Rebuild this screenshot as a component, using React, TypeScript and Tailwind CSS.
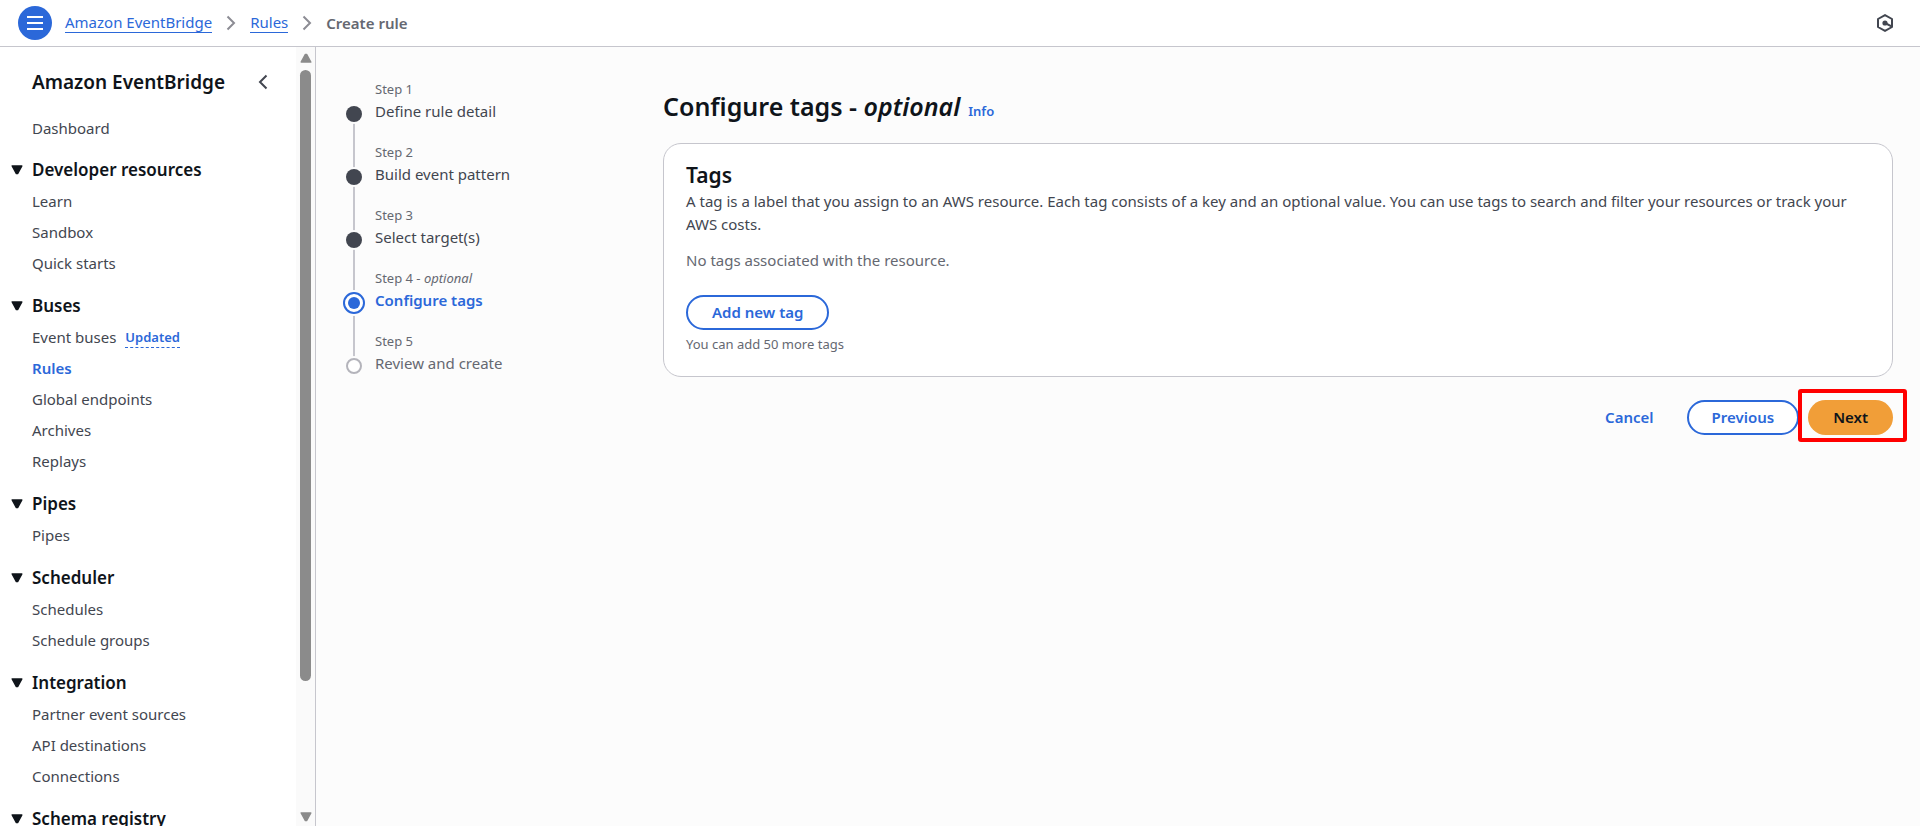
type NavLink = { label: string; badge?: string; active?: boolean };
type NavSection = { title: string; links: NavLink[] };
type StepState = 'done' | 'current' | 'upcoming';
type Step = { name: string; state: StepState; optional?: boolean };

const sections: NavSection[] = [
  { title: 'Developer resources', links: [{ label: 'Learn' }, { label: 'Sandbox' }, { label: 'Quick starts' }] },
  {
    title: 'Buses',
    links: [
      { label: 'Event buses', badge: 'Updated' },
      { label: 'Rules', active: true },
      { label: 'Global endpoints' },
      { label: 'Archives' },
      { label: 'Replays' },
    ],
  },
  { title: 'Pipes', links: [{ label: 'Pipes' }] },
  { title: 'Scheduler', links: [{ label: 'Schedules' }, { label: 'Schedule groups' }] },
  {
    title: 'Integration',
    links: [{ label: 'Partner event sources' }, { label: 'API destinations' }, { label: 'Connections' }],
  },
  { title: 'Schema registry', links: [] },
];

const steps: Step[] = [
  { name: 'Define rule detail', state: 'done' },
  { name: 'Build event pattern', state: 'done' },
  { name: 'Select target(s)', state: 'done' },
  { name: 'Configure tags', state: 'current', optional: true },
  { name: 'Review and create', state: 'upcoming' },
];

const stepText: Record<StepState, string> = {
  done: 'text-[#424650]',
  current: 'font-semibold text-[#2b68d9]',
  upcoming: 'text-[#656871]',
};

function Chevron({ className }: { className: string }) {
  return (
    <svg viewBox="0 0 10 16" fill="none" stroke="currentColor" strokeWidth="2" className={className} aria-hidden="true">
      <path d="M1.5 1.5 8 8l-6.5 6.5" />
    </svg>
  );
}

function Triangle({ className }: { className: string }) {
  return (
    <svg viewBox="0 0 12 10" fill="currentColor" stroke="currentColor" strokeWidth="1.5" strokeLinejoin="round" className={className} aria-hidden="true">
      <path d="M1.2 1h9.6L6.6 8.6H5.4Z" />
    </svg>
  );
}

function TopBar() {
  return (
    <header className="flex h-[47px] shrink-0 items-center border-b border-[#c6c6cd] bg-white pl-[18px] pr-[27px]">
      <button type="button" aria-label="Open navigation" className="flex size-[34px] items-center justify-center rounded-full bg-[#2b68d9]">
        <svg viewBox="0 0 16 14" stroke="#fff" strokeWidth="2" className="h-[14px] w-4" aria-hidden="true">
          <path d="M0 1h16M0 7h16M0 13h16" />
        </svg>
      </button>
      <nav aria-label="Breadcrumbs" className="ml-[13px]">
        <ol className="flex items-center gap-[14px]">
          <li className="flex items-center gap-[14px] text-[#2b68d9]">
            <a href="#eventbridge" className="border-b border-[#2b68d9] leading-[19px]">Amazon EventBridge</a>
            <Chevron className="h-4 w-[10px] text-[#8c8c94]" />
          </li>
          <li className="flex items-center gap-[14px] text-[#2b68d9]">
            <a href="#rules" className="border-b border-[#2b68d9] leading-[19px]">Rules</a>
            <Chevron className="h-4 w-[10px] text-[#8c8c94]" />
          </li>
          <li className="font-semibold text-[#656871]" aria-current="page">Create rule</li>
        </ol>
      </nav>
      <button type="button" aria-label="Assistant" className="ml-auto text-[#424650]">
        <svg viewBox="0 0 16 18" fill="none" stroke="currentColor" strokeWidth="2" strokeLinejoin="round" className="h-[18px] w-4" aria-hidden="true">
          <path d="M8 1.1 15 5v8l-7 3.9L1 13V5Z" />
          <path d="m8 9 6.5 3.4" />
          <circle cx="8" cy="9" r="1.6" fill="currentColor" />
        </svg>
      </button>
    </header>
  );
}

function Sidebar() {
  return (
    <aside className="flex w-[316px] shrink-0 border-r border-[#c6c6cd] bg-white">
      <div className="min-w-0 flex-1 overflow-hidden">
        <div className="flex items-center justify-between pb-[21px] pl-8 pr-[28px] pt-[21px]">
          <h2 className="text-[19px] font-semibold leading-7 text-[#0f141a]">Amazon EventBridge</h2>
          <button type="button" aria-label="Close navigation" className="text-[#424650]">
            <Chevron className="h-4 w-[10px] rotate-180" />
          </button>
        </div>
        <nav aria-label="Amazon EventBridge">
          <a href="#dashboard" className="mb-[13px] block pl-8 leading-[23px] text-[#424650]">Dashboard</a>
          {sections.map((section) => (
            <section key={section.title} className="mb-[10px]">
              <h3 className="text-[17px] font-semibold text-[#0f141a]">
                <button type="button" aria-expanded="true" className="flex h-[33px] items-center gap-[9px] pl-[11px]">
                  <Triangle className="h-[10px] w-3" />
                  {section.title}
                </button>
              </h3>
              <ul className="pl-8">
                {section.links.map((link) => (
                  <li key={link.label} className="flex h-[31px] items-center gap-[9px]">
                    <a href="#nav" className={link.active ? 'font-semibold text-[#2b68d9]' : 'text-[#424650]'}>
                      {link.label}
                    </a>
                    {link.badge && (
                      <button type="button" className="border-b border-dashed border-[#2b68d9] text-[13px] font-semibold leading-5 text-[#2b68d9]">
                        {link.badge}
                      </button>
                    )}
                  </li>
                ))}
              </ul>
            </section>
          ))}
        </nav>
      </div>
      <div className="flex w-[19px] shrink-0 flex-col items-center bg-[#fafafa] pb-1 pt-[6px] text-[#8b8b8b]" aria-hidden="true">
        <Triangle className="mb-[7px] h-[10px] w-3 shrink-0 rotate-180" />
        <div className="h-[79.5%] w-[11px] rounded-full bg-[#8b8b8b]" />
        <Triangle className="mt-auto h-[10px] w-3 shrink-0" />
      </div>
    </aside>
  );
}

function StepMarker({ state }: { state: StepState }) {
  if (state === 'current') {
    return (
      <span className="relative z-10 flex size-[22px] items-center justify-center rounded-full border-2 border-[#2b68d9] bg-white ring-2 ring-[#fcfcfc]">
        <span className="size-3 rounded-full bg-[#2b68d9]" />
      </span>
    );
  }
  if (state === 'upcoming') {
    return <span className="relative z-10 size-4 rounded-full border-2 border-[#b4b4bb] bg-white ring-2 ring-[#fcfcfc]" />;
  }
  return <span className="relative z-10 size-4 rounded-full bg-[#424650] ring-2 ring-[#fcfcfc]" />;
}

function Steps() {
  return (
    <nav aria-label="Steps" className="w-[321px] shrink-0">
      <ol>
        {steps.map((step, i) => (
          <li key={step.name} className="flex h-[63px] items-end gap-[9px]">
            <span className="flex h-full w-6 flex-col items-center" aria-hidden="true">
              <span className={i === 0 ? '-my-1 w-[2px] flex-1' : '-my-1 w-[2px] flex-1 bg-[#c6c6cd]'} />
              <span className="flex size-6 shrink-0 items-center justify-center">
                <StepMarker state={step.state} />
              </span>
            </span>
            <span className="pb-[3px]">
              <span className="block text-[13px] leading-[22px] text-[#656871]">
                Step {i + 1}
                {step.optional && <> - <i>optional</i></>}
              </span>
              <a href="#step" className={`block leading-[23px] ${stepText[step.state]}`}>{step.name}</a>
            </span>
          </li>
        ))}
      </ol>
    </nav>
  );
}

export default function App() {
  return (
    <div className="flex h-screen flex-col overflow-hidden bg-[#fcfcfc] font-['Noto_Sans',sans-serif] text-[15px] leading-[23px]">
      <TopBar />
      <div className="flex min-h-0 flex-1">
        <Sidebar />
        <main className="flex min-w-0 flex-1 items-start pl-[26px] pr-[27px] pt-4">
          <Steps />
          <div className="min-w-0 flex-1 pt-[26px]">
            <div className="flex items-baseline gap-2">
              <h1 className="text-[25px] font-semibold leading-[34px] text-[#0f141a]">
                Configure tags - <i>optional</i>
              </h1>
              <a href="#info" className="text-[13px] font-semibold text-[#2b68d9]">Info</a>
            </div>
            <section className="mt-5 rounded-[18px] border border-[#c6c6cd] bg-white px-[22px] pb-[22px] pt-[17px]">
              <h2 className="text-[21px] font-semibold leading-[29px] text-[#0f141a]">Tags</h2>
              <p className="text-[#424650]">
                A tag is a label that you assign to an AWS resource. Each tag consists of a key and an optional value. You
                can use tags to search and filter your resources or track your AWS costs.
              </p>
              <p className="mt-[13px] text-[#656871]">No tags associated with the resource.</p>
              <button type="button" className="mt-[23px] block h-[35px] rounded-full border-2 border-[#2b68d9] bg-white px-6 font-semibold text-[#2b68d9]">
                Add new tag
              </button>
              <p className="mt-1 text-[13px] leading-5 text-[#656871]">You can add 50 more tags</p>
            </section>
            <div className="mt-[23px] flex items-center justify-end font-semibold">
              <button type="button" className="mr-[33px] text-[#2b68d9]">Cancel</button>
              <button type="button" className="mr-[9px] h-[35px] rounded-full border-2 border-[#2b68d9] bg-white px-[23px] text-[#2b68d9]">
                Previous
              </button>
              <div className="relative">
                <button type="button" className="h-[35px] rounded-full bg-[#f19e38] px-[25px] text-[#0f141a]">Next</button>
                <span className="pointer-events-none absolute -bottom-[7px] -left-[10px] -right-[14px] -top-[11px] rounded-[3px] border-4 border-[#ff0000]" />
              </div>
            </div>
          </div>
        </main>
      </div>
    </div>
  );
}
